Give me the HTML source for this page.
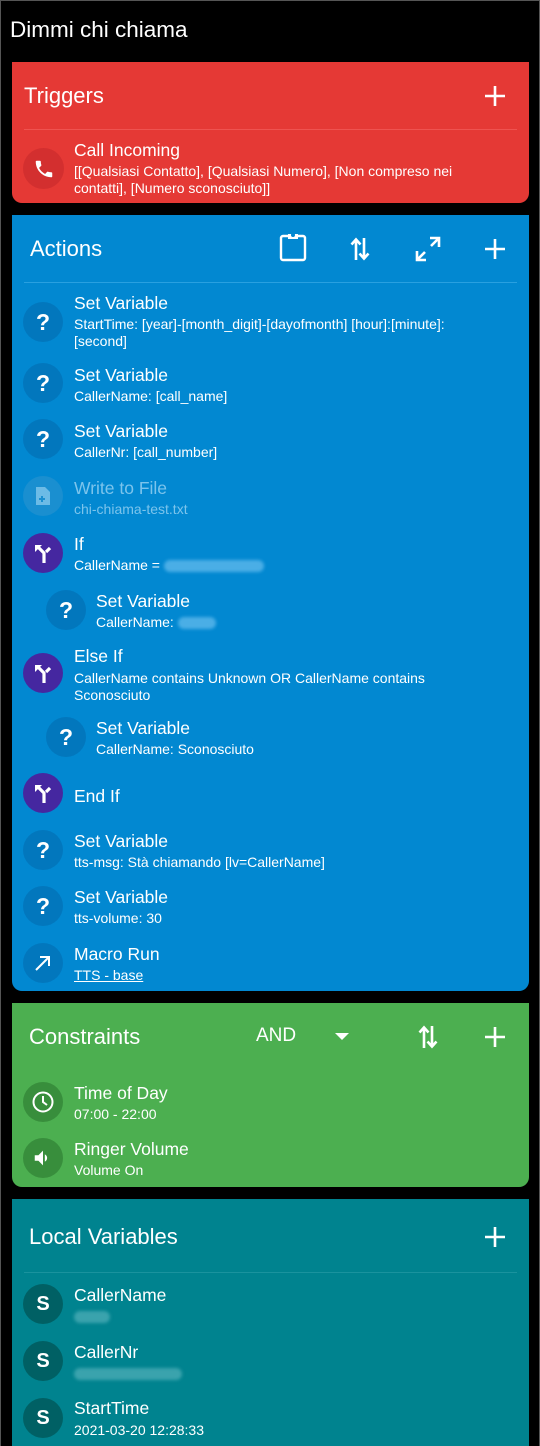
<!DOCTYPE html>
<html><head><meta charset="utf-8"><style>
*{margin:0;padding:0;box-sizing:border-box}
html,body{width:540px;height:1446px;overflow:hidden}
body{background:#000;position:relative;font-family:"Liberation Sans",Roboto,sans-serif;color:#fff}
.frame{position:absolute;left:0;top:0;width:540px;height:1446px;border:1px solid #555;border-bottom:none}
.card{position:absolute;left:12px;width:517px}
.a{position:absolute}
.h{position:absolute;font-size:22px;line-height:26px}
.t{position:absolute;font-size:17.5px;line-height:20px;white-space:nowrap}
.s{position:absolute;font-size:14px;line-height:16.5px}
.c{position:absolute;width:40px;height:40px;border-radius:50%;display:flex;align-items:center;justify-content:center;font-weight:bold;font-size:23px}
.div{position:absolute;left:12px;right:12px;height:1px}
.blur{display:inline-block;height:12px;border-radius:6px;vertical-align:middle;filter:blur(1.5px)}
</style></head><body>
<div class="frame"></div>
<div class="t" style="left:10px;top:18px;font-size:22.5px;line-height:24px">Dimmi chi chiama</div>

<div class="card" style="top:62px;height:141px;background:#e53935;border-radius:0 0 10px 10px">
  <div class="h" style="left:12px;top:21px">Triggers</div>
  <svg class="a" style="left:472px;top:23px" width="22" height="22"><path d="M11 1v20M1 11h20" stroke="#fff" stroke-width="2.6"/></svg>
  <div class="div" style="top:67px;background:#ef5350"></div>
  <div class="c" style="left:11px;top:86px;width:41px;height:41px;background:#d32f2f"><svg width="22" height="22" viewBox="0 0 24 24"><path fill="#fff" d="M6.6 10.8c1.4 2.8 3.8 5.1 6.6 6.6l2.2-2.2c.3-.3.7-.4 1-.2 1.1.4 2.3.6 3.6.6.6 0 1 .4 1 1V20c0 .6-.4 1-1 1C10.6 21 3 13.4 3 4c0-.6.4-1 1-1h3.5c.6 0 1 .4 1 1 0 1.3.2 2.5.6 3.6.1.3 0 .7-.2 1z"/></svg></div>
  <div class="t" style="left:62px;top:78px">Call Incoming</div>
  <div class="s" style="left:62px;top:101px;width:405px">[[Qualsiasi Contatto], [Qualsiasi Numero], [Non compreso nei contatti], [Numero sconosciuto]]</div>
</div>

<div class="card" style="top:215px;height:776px;background:#0288d1;border-radius:0 0 10px 10px">
  <div class="h" style="left:18px;top:21px">Actions</div>
  <svg class="a" style="left:267px;top:17px" width="28" height="30" viewBox="0 0 28 30"><rect x="2" y="4" width="24" height="24" rx="2" fill="none" stroke="#fff" stroke-width="2.4"/><path d="M9 2h10v5H9z" fill="#fff"/><circle cx="14" cy="3" r="2" fill="#0288d1"/></svg>
  <svg class="a" style="left:338px;top:21px" width="20" height="26" viewBox="0 0 20 26"><path d="M6 24V4M1.5 8.5L6 3.5l4.5 5M14 2v20M9.5 17.5l4.5 5 4.5-5" fill="none" stroke="#fff" stroke-width="2.6"/></svg>
  <svg class="a" style="left:403px;top:21px" width="26" height="26" viewBox="0 0 26 26"><path d="M15 2h9v9M24 2l-8 8M11 24H2v-9M2 24l8-8" fill="none" stroke="#fff" stroke-width="2.6"/></svg>
  <svg class="a" style="left:472px;top:23px" width="22" height="22"><path d="M11 1v20M1 11h20" stroke="#fff" stroke-width="2.6"/></svg>
  <div class="div" style="top:67px;background:#29a0e0"></div>
</div>

<div class="card" style="top:1003px;height:184px;background:#4caf50;border-radius:0 0 10px 10px">
  <div class="h" style="left:17px;top:21px">Constraints</div>
  <div class="t" style="left:244px;top:23px;font-size:19px">AND</div>
  <svg class="a" style="left:323px;top:30px" width="14" height="8"><path d="M0 0h14L7 7z" fill="#fff"/></svg>
  <svg class="a" style="left:406px;top:21px" width="20" height="26" viewBox="0 0 20 26"><path d="M6 24V4M1.5 8.5L6 3.5l4.5 5M14 2v20M9.5 17.5l4.5 5 4.5-5" fill="none" stroke="#fff" stroke-width="2.6"/></svg>
  <svg class="a" style="left:472px;top:23px" width="22" height="22"><path d="M11 1v20M1 11h20" stroke="#fff" stroke-width="2.6"/></svg>
</div>

<div class="card" style="top:1199px;height:247px;background:#00838f">
  <div class="h" style="left:17px;top:25px">Local Variables</div>
  <svg class="a" style="left:472px;top:27px" width="22" height="22"><path d="M11 1v20M1 11h20" stroke="#fff" stroke-width="2.6"/></svg>
  <div class="div" style="top:73px;background:#1a939e"></div>
</div>

<div class="c" style="left:23px;top:302px;background:#0277bd">?</div>
<div class="t" style="left:74px;top:293px">Set Variable</div>
<div class="s" style="left:74px;top:316px;width:440px">StartTime: [year]-[month_digit]-[dayofmonth] [hour]:[minute]:<br>[second]</div>

<div class="c" style="left:23px;top:363px;background:#0277bd">?</div>
<div class="t" style="left:74px;top:365px">Set Variable</div>
<div class="s" style="left:74px;top:388px">CallerName: [call_name]</div>

<div class="c" style="left:23px;top:419px;background:#0277bd">?</div>
<div class="t" style="left:74px;top:421px">Set Variable</div>
<div class="s" style="left:74px;top:444px">CallerNr: [call_number]</div>

<div class="c" style="left:23px;top:476px;background:#1a8fd0"><svg width="16" height="20" viewBox="0 0 16 20"><path d="M1 1h9l5 5v13H1z" fill="#6cbbe6"/><path d="M4 13h6M7 10v6" stroke="#1a8fd0" stroke-width="2"/></svg></div>
<div class="t" style="left:74px;top:478px;color:#7cc4ec">Write to File</div>
<div class="s" style="left:74px;top:501px;color:#7cc4ec">chi-chiama-test.txt</div>

<div class="c" style="left:23px;top:533px;background:#4527a0"><svg width="20" height="22" viewBox="0 0 20 22"><path d="M11 21v-10L5 5" fill="none" stroke="#fff" stroke-width="3.2"/><path d="M2 3h7L2 10z" fill="#fff"/><path d="M13 10l4-4" stroke="#fff" stroke-width="3.2"/></svg></div>
<div class="t" style="left:74px;top:534px">If</div>
<div class="s" style="left:74px;top:557px">CallerName = <span class="blur" style="width:100px;background:#4aaee6"></span></div>

<div class="c" style="left:46px;top:590px;background:#0277bd">?</div>
<div class="t" style="left:96px;top:591px">Set Variable</div>
<div class="s" style="left:96px;top:614px">CallerName: <span class="blur" style="width:38px;background:#4aaee6"></span></div>

<div class="c" style="left:23px;top:653px;background:#4527a0"><svg width="20" height="22" viewBox="0 0 20 22"><path d="M11 21v-10L5 5" fill="none" stroke="#fff" stroke-width="3.2"/><path d="M2 3h7L2 10z" fill="#fff"/><path d="M13 10l4-4" stroke="#fff" stroke-width="3.2"/></svg></div>
<div class="t" style="left:74px;top:646px">Else If</div>
<div class="s" style="left:74px;top:670px;width:385px">CallerName contains Unknown OR CallerName contains Sconosciuto</div>

<div class="c" style="left:46px;top:717px;background:#0277bd">?</div>
<div class="t" style="left:96px;top:718px">Set Variable</div>
<div class="s" style="left:96px;top:741px">CallerName: Sconosciuto</div>

<div class="c" style="left:23px;top:773px;background:#4527a0"><svg width="20" height="22" viewBox="0 0 20 22"><path d="M11 21v-10L5 5" fill="none" stroke="#fff" stroke-width="3.2"/><path d="M2 3h7L2 10z" fill="#fff"/><path d="M13 10l4-4" stroke="#fff" stroke-width="3.2"/></svg></div>
<div class="t" style="left:74px;top:786px">End If</div>

<div class="c" style="left:23px;top:830px;background:#0277bd">?</div>
<div class="t" style="left:74px;top:831px">Set Variable</div>
<div class="s" style="left:74px;top:854px">tts-msg: Stà chiamando [lv=CallerName]</div>

<div class="c" style="left:23px;top:886px;background:#0277bd">?</div>
<div class="t" style="left:74px;top:887px">Set Variable</div>
<div class="s" style="left:74px;top:910px">tts-volume: 30</div>

<div class="c" style="left:23px;top:943px;background:#0277bd"><svg width="18" height="18" viewBox="0 0 18 18"><path d="M2 16L15 3M6 3h9v9" fill="none" stroke="#fff" stroke-width="2"/></svg></div>
<div class="t" style="left:74px;top:944px">Macro Run</div>
<div class="s" style="left:74px;top:967px;text-decoration:underline">TTS - base</div>

<div class="c" style="left:23px;top:1082px;background:#388e3c"><svg width="24" height="24" viewBox="0 0 24 24"><circle cx="12" cy="12" r="9.5" fill="none" stroke="#fff" stroke-width="2"/><path d="M12 6v6l4 3" fill="none" stroke="#fff" stroke-width="2"/></svg></div>
<div class="t" style="left:74px;top:1083px">Time of Day</div>
<div class="s" style="left:74px;top:1106px">07:00 - 22:00</div>

<div class="c" style="left:23px;top:1138px;background:#388e3c"><svg width="22" height="22" viewBox="0 0 24 24"><path fill="#fff" d="M3 9v6h4l5 5V4L7 9H3zm13.5 3A4.5 4.5 0 0 0 14 8v8a4.5 4.5 0 0 0 2.5-4z"/></svg></div>
<div class="t" style="left:74px;top:1139px">Ringer Volume</div>
<div class="s" style="left:74px;top:1162px">Volume On</div>

<div class="c" style="left:23px;top:1284px;background:#006064;font-size:20px">S</div>
<div class="t" style="left:74px;top:1285px">CallerName</div>
<div class="s" style="left:74px;top:1308px"><span class="blur" style="width:36px;background:#3aa3ad"></span></div>

<div class="c" style="left:23px;top:1341px;background:#006064;font-size:20px">S</div>
<div class="t" style="left:74px;top:1342px">CallerNr</div>
<div class="s" style="left:74px;top:1365px"><span class="blur" style="width:108px;background:#3aa3ad"></span></div>

<div class="c" style="left:23px;top:1398px;background:#006064;font-size:20px">S</div>
<div class="t" style="left:74px;top:1398px">StartTime</div>
<div class="s" style="left:74px;top:1422px">2021-03-20 12:28:33</div>
</body></html>
